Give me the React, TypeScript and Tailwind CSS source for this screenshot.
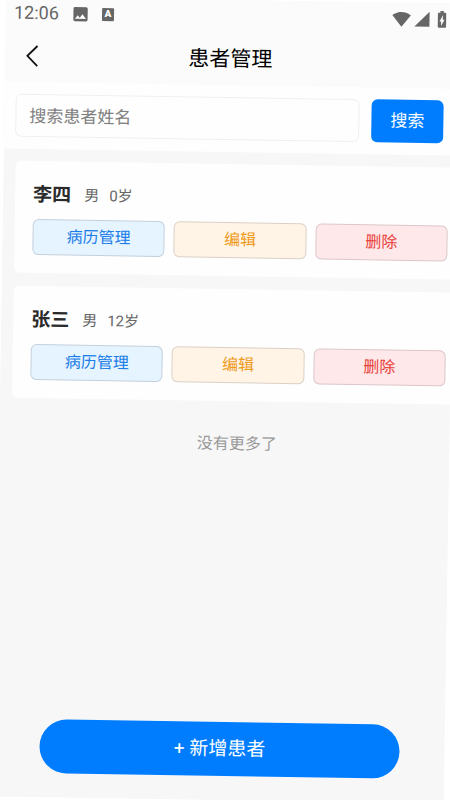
import { useState } from "react";
import { MdBatteryChargingFull, MdImage, MdSignalCellular4Bar, MdSignalWifi4Bar } from "react-icons/md";

type Patient = { id: number; name: string; gender: string; age: number };

const patients: Patient[] = [
  { id: 1, name: "李四", gender: "男", age: 0 },
  { id: 2, name: "张三", gender: "男", age: 12 },
];

function StatusBar() {
  return (
    <div className="flex h-8 items-center pl-2 pr-1 text-[#666]">
      <span className="text-[18px] leading-8">12:06</span>
      <MdImage className="ml-3 size-[19px]" />
      <span className="ml-3 flex h-[13px] w-3 items-center justify-center rounded-[1px] bg-[#666] text-[10px] leading-none font-black text-white">
        A
      </span>
      <div className="ml-auto flex items-center">
        <MdSignalWifi4Bar className="size-[19px]" />
        <MdSignalCellular4Bar className="ml-0.5 size-[18px]" />
        <MdBatteryChargingFull className="ml-px size-5" />
      </div>
    </div>
  );
}

function PatientCard({ patient }: { patient: Patient }) {
  const action = "h-9 flex-1 rounded-md border text-[16px] leading-5 cursor-pointer";

  return (
    <li className="rounded-md bg-[#fefefe] p-[18px]">
      <div className="mb-2 flex h-8 items-center text-[15px] text-[#666]">
        <h2 className="mr-[13px] text-[19px] font-bold text-[#2b2b2b]">{patient.name}</h2>
        <span className="mr-[10px]">{patient.gender}</span>
        <span>{patient.age}岁</span>
      </div>
      <div className="flex gap-[9px]">
        <button className={`${action} border-[#c3d0dc] bg-[#e6f4ff] text-[#1a7de8]`}>病历管理</button>
        <button className={`${action} border-[#dbd0c6] bg-[#fff4e6] text-[#f09a1a]`}>编辑</button>
        <button className={`${action} border-[#dcc6ca] bg-[#ffe8e9] text-[#e8403a]`}>删除</button>
      </div>
    </li>
  );
}

export default function App() {
  const [keyword, setKeyword] = useState("");
  const shown = patients.filter((p) => p.name.includes(keyword));

  return (
    <div className="h-screen overflow-hidden bg-white font-['Roboto','Noto_Sans_CJK_SC',sans-serif]">
      <div className="flex min-h-screen rotate-[0.9deg] flex-col overflow-hidden bg-[#f7f7f7]">
        <header className="bg-[#fbfbfb]">
          <StatusBar />
          <div className="grid h-[53px] grid-cols-[48px_1fr_48px] items-center">
            <button aria-label="返回" className="flex h-full items-center pl-5 cursor-pointer">
              <svg width="14" height="22" viewBox="0 0 14 22" fill="none" stroke="#111" strokeWidth="1.8">
                <path d="M12 1 2 11l10 10" />
              </svg>
            </button>
            <h1 className="text-center text-[21px] leading-7 text-black">患者管理</h1>
          </div>
        </header>

        {/* Search */}
        <form className="flex gap-3 bg-[#fefefe] px-[11px] py-3" onSubmit={(e) => e.preventDefault()}>
          <input
            type="text"
            aria-label="搜索患者姓名"
            placeholder="搜索患者姓名"
            value={keyword}
            onChange={(e) => setKeyword(e.target.value)}
            className="h-[43px] min-w-0 flex-1 rounded-md border border-[#f0f0f0] px-[13px] text-[17px] text-[#333] outline-none placeholder:text-[#808080]"
          />
          <button type="submit" className="h-[43px] w-[72px] rounded-md bg-[#007dff] text-[17px] text-white cursor-pointer">
            搜索
          </button>
        </form>

        <main className="w-[calc(100%+25px)] px-3 py-3">
          <ul className="flex flex-col gap-[13px]">
            {shown.map((p) => (
              <PatientCard key={p.id} patient={p} />
            ))}
          </ul>
          <p className="mt-[33px] text-center text-[16px] leading-5 text-[#999]">没有更多了</p>
        </main>

        <button className="mx-[45px] mt-auto mb-6 h-[54px] rounded-full bg-[#007dff] text-[19px] text-white cursor-pointer">
          + 新增患者
        </button>
      </div>
    </div>
  );
}
